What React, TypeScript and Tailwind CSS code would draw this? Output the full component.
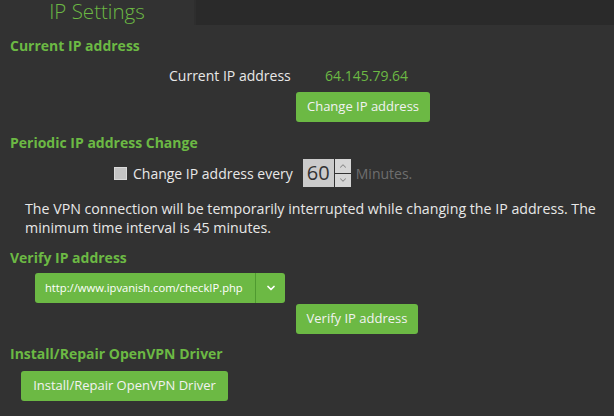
import { ChevronDown, ChevronUp } from "lucide-react"

const font = { fontFamily: '"Open Sans", "Noto Sans", sans-serif' }

export default function App() {
  return (
    <div className="w-[614px] h-[416px] bg-[#323232] text-[#e8e8e8] overflow-hidden" style={font}>
      {/* Tab strip */}
      <div className="flex h-[25px]">
        <div className="w-[194px] flex justify-center">
          <span className="text-[20.5px] leading-[23px] text-[#6cb944] font-light">IP Settings</span>
        </div>
        <div className="flex-1 bg-[#2a2a2a] border-l-2 border-[#2e2e2e]" />
      </div>

      <div className="px-[10px]">
        <SectionTitle className="mt-[13px]">Current IP address</SectionTitle>
        <div className="flex items-center mt-[12px] pl-[159px] text-[14px] leading-[20px]">
          <span className="w-[156px]">Current IP address</span>
          <span className="text-[#6cb944]">64.145.79.64</span>
        </div>
        <div className="pl-[286px] mt-[6px]">
          <GreenButton className="w-[134px]">Change IP address</GreenButton>
        </div>

        <SectionTitle className="mt-[13px]">Periodic IP address Change</SectionTitle>
        <div className="flex items-center mt-[8px] pl-[104px] h-[28px]">
          <div className="w-[13px] h-[13px] bg-[#c4c4c4] border border-[#dadada]" />
          <span className="ml-[6px] text-[14px]">Change IP address every</span>
          <div className="ml-[10px] flex h-[28px]">
            <div className="w-[31px] bg-[#cbcbcb] text-[#333] text-[20px] leading-[28px] text-center">60</div>
            <div className="w-[16px] flex flex-col gap-[1px] bg-[#323232] ml-[1px]">
              <div className="flex-1 bg-[#d6d6d6] flex items-center justify-center">
                <ChevronUp className="w-[10px] h-[10px] text-[#8a8a8a]" strokeWidth={2.5} />
              </div>
              <div className="flex-1 bg-[#d6d6d6] flex items-center justify-center">
                <ChevronDown className="w-[10px] h-[10px] text-[#8a8a8a]" strokeWidth={2.5} />
              </div>
            </div>
          </div>
          <span className="ml-[5px] text-[14px] text-[#6e6e6e]">Minutes.</span>
        </div>

        <p className="mt-[12px] pl-[15px] text-[14.2px] leading-[19px] pr-[4px]">
          The VPN connection will be temporarily interrupted while changing the IP address. The minimum time interval is 45 minutes.
        </p>

        <SectionTitle className="mt-[13px]">Verify IP address</SectionTitle>
        <div className="pl-[25px] mt-[7px]">
          <div className="w-[250px] h-[30px] bg-[#6cb944] rounded-[3px] flex items-center text-white">
            <span className="flex-1 pl-[10px] text-[11.2px]">http://www.ipvanish.com/checkIP.php</span>
            <div className="w-[30px] h-full border-l border-[#4f9a30] flex items-center justify-center">
              <ChevronDown className="w-[12px] h-[12px]" strokeWidth={3.5} />
            </div>
          </div>
        </div>
        <div className="pl-[286px] mt-[1px]">
          <GreenButton className="w-[122px]">Verify IP address</GreenButton>
        </div>

        <SectionTitle className="mt-[12px]">Install/Repair OpenVPN Driver</SectionTitle>
        <div className="pl-[11px] mt-[9px]">
          <GreenButton className="w-[207px]">Install/Repair OpenVPN Driver</GreenButton>
        </div>
      </div>
    </div>
  )
}

function SectionTitle({ children, className = "" }: { children: React.ReactNode; className?: string }) {
  return <h2 className={`text-[14px] font-bold leading-[16px] text-[#6cb944] ${className}`}>{children}</h2>
}

function GreenButton({ children, className = "" }: { children: React.ReactNode; className?: string }) {
  return (
    <button className={`h-[30px] bg-[#6cb944] rounded-[3px] text-[13px] text-[#f2f2f2] flex items-center justify-center ${className}`}>
      {children}
    </button>
  )
}
